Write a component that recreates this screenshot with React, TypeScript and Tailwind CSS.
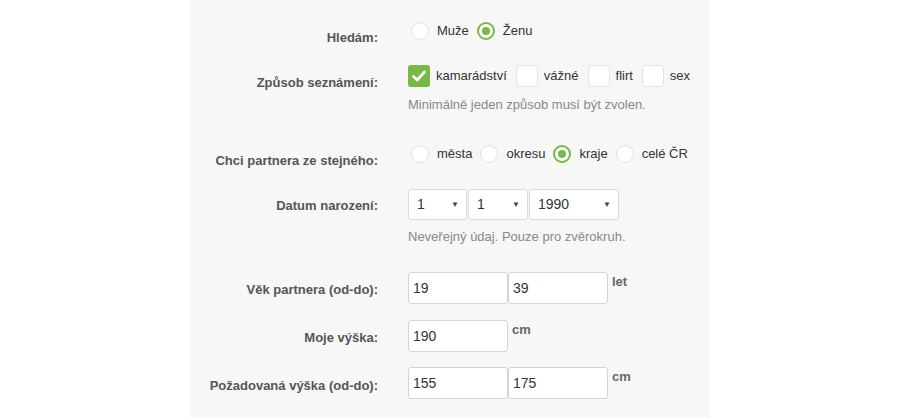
import { ReactNode } from "react";

const font = { fontFamily: '"Liberation Sans", Arial, sans-serif' };

function Label({ children, pt }: { children: ReactNode; pt: string }) {
    return (
        <div
            className={`-mb-2 w-[188px] shrink-0 text-right text-[13px] leading-4 font-bold text-[#555] ${pt}`}
        >
            {children}
        </div>
    );
}

function Radio({ checked, label }: { checked?: boolean; label: string }) {
    return (
        <label className="flex items-center gap-2">
            {checked ? (
                <span className="ml-[3px] flex h-[18px] w-[18px] items-center justify-center rounded-full border-2 border-[#7ab648] bg-white">
                    <span className="h-[8px] w-[8px] rounded-full bg-[#7ab648]" />
                </span>
            ) : (
                <span className="ml-[3px] h-[18px] w-[18px] rounded-full border border-[#e3e3e3] bg-white shadow-[inset_0_1px_1px_rgba(0,0,0,0.04)]" />
            )}
            <span className="text-[13px] text-[#333]">{label}</span>
        </label>
    );
}

function Check({ checked, label }: { checked?: boolean; label: string }) {
    return (
        <label className="flex items-center gap-[6px]">
            {checked ? (
                <span className="flex h-[22px] w-[22px] items-center justify-center rounded-[3px] bg-[#78b843]">
                    <svg width="14" height="12" viewBox="0 0 14 12" fill="none">
                        <path
                            d="M1.5 6.5 L5.2 10 L12.5 2"
                            stroke="white"
                            strokeWidth="2.6"
                            strokeLinecap="round"
                            strokeLinejoin="round"
                        />
                    </svg>
                </span>
            ) : (
                <span className="h-[22px] w-[22px] rounded-[3px] border border-[#e3e3e3] bg-white" />
            )}
            <span className="text-[13px] text-[#333]">{label}</span>
        </label>
    );
}

function Select({ value, w }: { value: string; w: string }) {
    return (
        <div
            className={`flex h-[31px] items-center justify-between rounded-[3px] border border-[#d9d9d9] bg-white pl-[8px] pr-[7px] text-[14px] text-[#333] ${w}`}
        >
            <span>{value}</span>
            <span className="text-[8px] text-[#444]">▼</span>
        </div>
    );
}

function Input({ value }: { value: string }) {
    return (
        <div className="flex h-[32px] w-[100px] items-center rounded-[3px] border border-[#d4d4d4] bg-white pl-[4px] text-[14px] text-[#333]">
            {value}
        </div>
    );
}

function Unit({ children }: { children: ReactNode }) {
    return (
        <span className="pl-[4px] pt-[2px] text-[13px] leading-4 font-bold text-[#666]">
            {children}
        </span>
    );
}

export default function App() {
    return (
        <div className="h-[420px] w-[900px] bg-white" style={font}>
            <div className="mx-auto h-[418px] w-[520px] bg-[#f7f7f7] pt-[21px]">
                {/* Hledám */}
                <div className="flex gap-[30px]">
                    <Label pt="pt-[9px]">Hledám:</Label>
                    <div className="flex h-5 items-center gap-[5px]">
                        <Radio label="Muže" />
                        <Radio checked label="Ženu" />
                    </div>
                </div>

                {/* Způsob seznámení */}
                <div className="mt-[24px] flex gap-[30px]">
                    <Label pt="pt-[10px]">Způsob seznámení:</Label>
                    <div>
                        <div className="flex h-[22px] items-center gap-[9px]">
                            <Check checked label="kamarádství" />
                            <Check label="vážné" />
                            <Check label="flirt" />
                            <Check label="sex" />
                        </div>
                        <p className="mt-[10px] text-[13px] leading-4 text-[#888]">
                            Minimálně jeden způsob musí být zvolen.
                        </p>
                    </div>
                </div>

                {/* Chci partnera */}
                <div className="mt-[31px] flex gap-[30px]">
                    <Label pt="pt-[9px]">Chci partnera ze stejného:</Label>
                    <div className="flex h-5 items-center gap-[5px]">
                        <Radio label="města" />
                        <Radio label="okresu" />
                        <Radio checked label="kraje" />
                        <Radio label="celé ČR" />
                    </div>
                </div>

                {/* Datum narození */}
                <div className="mt-[25px] flex gap-[30px]">
                    <Label pt="pt-[9px]">Datum narození:</Label>
                    <div>
                        <div className="flex gap-px">
                            <Select value="1" w="w-[59px]" />
                            <Select value="1" w="w-[60px]" />
                            <Select value="1990" w="w-[90px]" />
                        </div>
                        <p className="mt-[9px] text-[13px] leading-4 text-[#888]">
                            Neveřejný údaj. Pouze pro zvěrokruh.
                        </p>
                    </div>
                </div>

                {/* Věk partnera */}
                <div className="mt-[27px] flex gap-[30px]">
                    <Label pt="pt-[10px]">Věk partnera (od-do):</Label>
                    <div className="flex items-start">
                        <Input value="19" />
                        <Input value="39" />
                        <Unit>let</Unit>
                    </div>
                </div>

                {/* Moje výška */}
                <div className="mt-[16px] flex gap-[30px]">
                    <Label pt="pt-[10px]">Moje výška:</Label>
                    <div className="flex items-start">
                        <Input value="190" />
                        <Unit>cm</Unit>
                    </div>
                </div>

                {/* Požadovaná výška */}
                <div className="mt-[15px] flex gap-[30px]">
                    <Label pt="pt-[11px]">Požadovaná výška (od-do):</Label>
                    <div className="flex items-start">
                        <Input value="155" />
                        <Input value="175" />
                        <Unit>cm</Unit>
                    </div>
                </div>
            </div>
        </div>
    );
}
